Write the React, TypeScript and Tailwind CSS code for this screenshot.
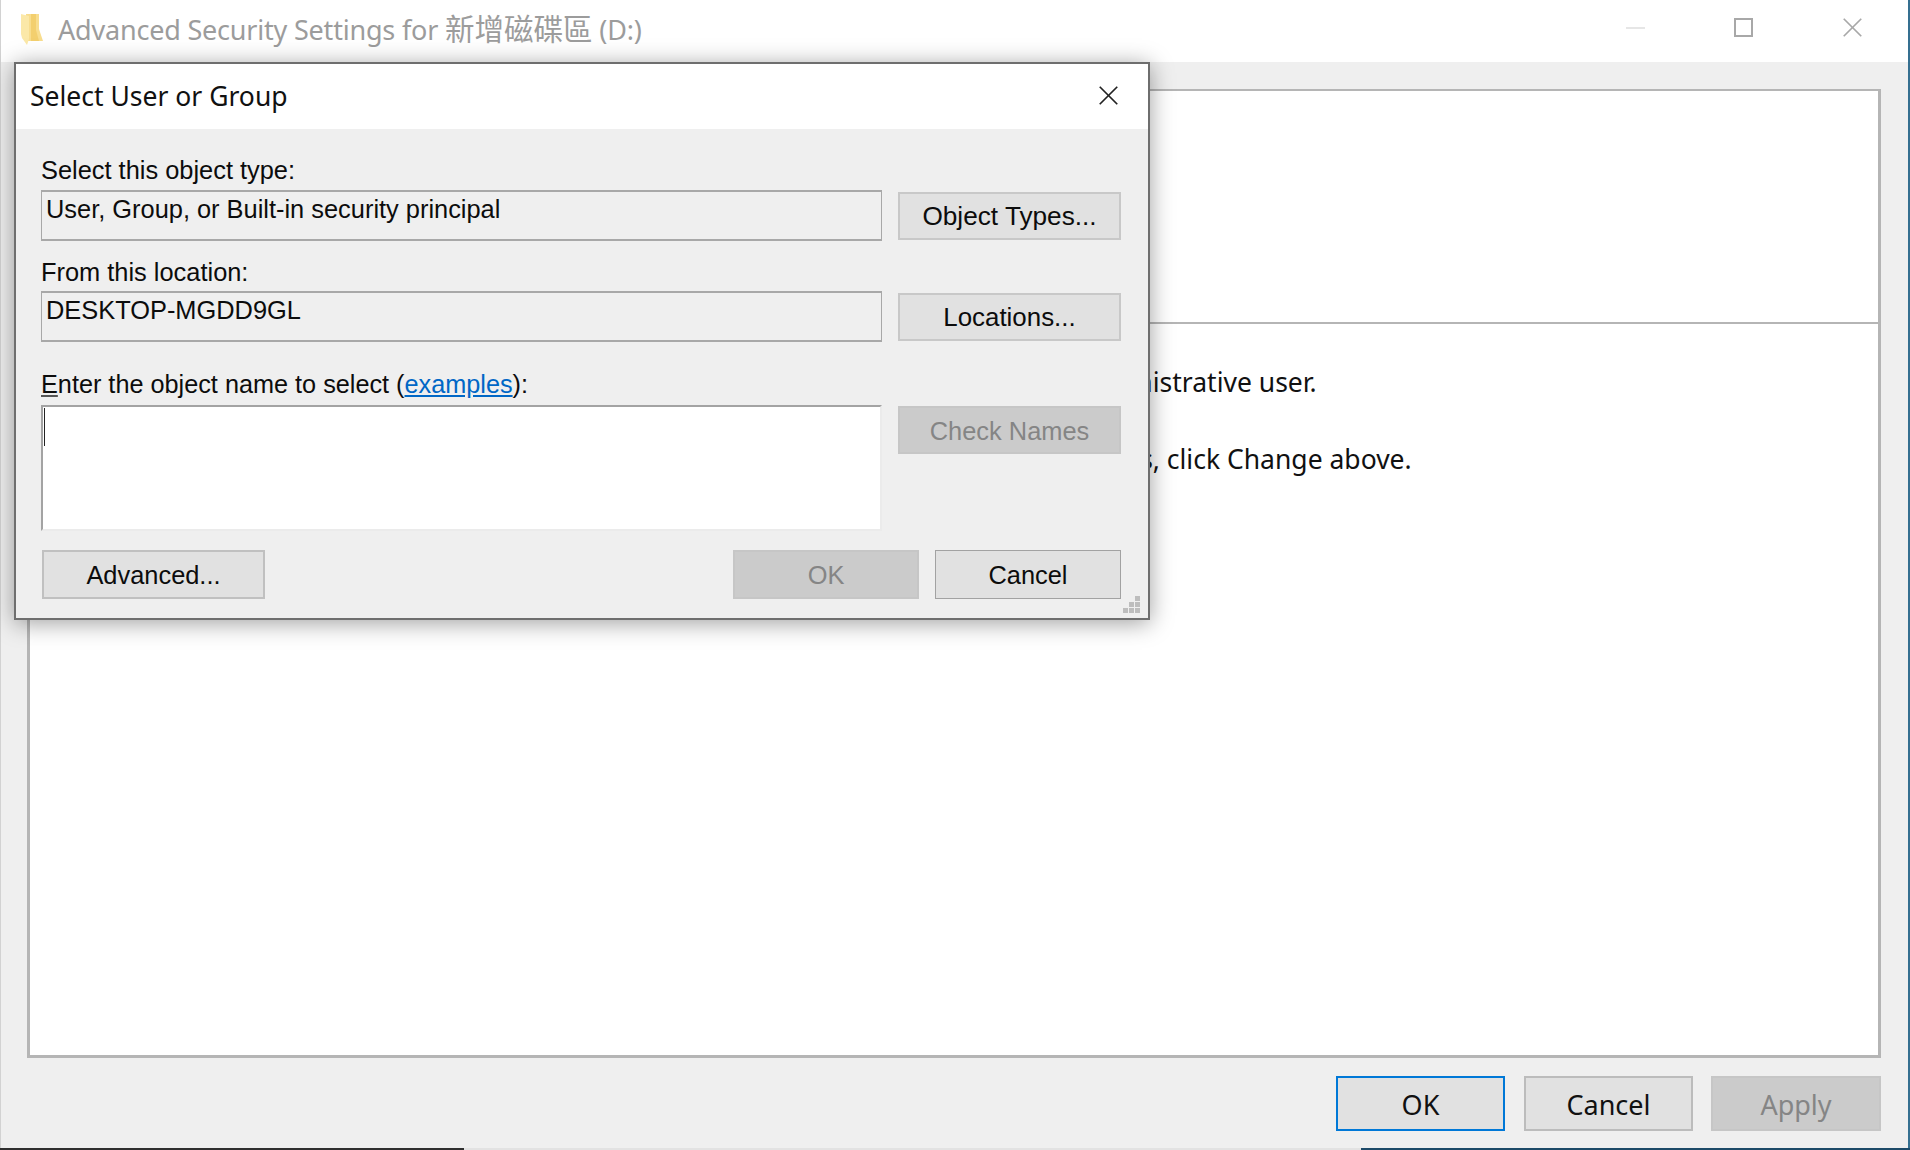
import React from "react";

const segoe = "font-['Noto_Sans','Noto_Sans_CJK_TC',sans-serif]";

function Folder() {
  return (
    <svg width="22" height="31" viewBox="0 0 22 31" className="shrink-0 mb-[4px]">
      <path d="M5 0H18V15L22 27H5Z" fill="#f8dd8e" />
      <path d="M10 0H15V16L18 27H10Z" fill="#f3cf6e" />
      <path d="M0 0L8 2V25L6 31L1 24L0 20Z" fill="#fbe8a8" />
    </svg>
  );
}

function Cross({ color, size, width }: { color: string; size: number; width: number }) {
  return (
    <svg width={size} height={size} viewBox="0 0 18 18" fill="none">
      <path d="M0.7 0.7L17.3 17.3M17.3 0.7L0.7 17.3" stroke={color} strokeWidth={width} />
    </svg>
  );
}

function Grip() {
  const cells = [
    [12, 0],
    [6, 6],
    [12, 6],
    [0, 12],
    [6, 12],
    [12, 12],
  ];
  return (
    <svg width="17" height="17" viewBox="0 0 17 17" className="absolute right-[8px] bottom-[5px]">
      {cells.map(([x, y]) => (
        <rect key={`${x}-${y}`} x={x} y={y} width="5" height="5" fill="#bdbdbd" />
      ))}
    </svg>
  );
}

function Dialog() {
  return (
    <div className="absolute left-[14px] top-[62px] w-[1136px] h-[558px] border-2 border-[#6e6e6e] bg-[#efefef] shadow-[0_3px_22px_rgba(0,0,0,0.38)] flex flex-col">
      <div className={`h-[65px] bg-white flex items-center justify-between pl-[14px] pr-[30px] shrink-0 ${segoe}`}>
        <span className="text-[26.5px] text-[#111] leading-none">Select User or Group</span>
        <div className="mb-[3px]">
          <Cross color="#222" size={19} width={1.6} />
        </div>
      </div>
      <div className="relative flex-1 flex flex-col pl-[25px] pr-[27px] pt-[27px] font-['Liberation_Sans',sans-serif] text-[#0c0c0c] text-[25.4px]">
        <div className="h-[28px] leading-[28px]">Select this object type:</div>
        <div className="mt-[6px] flex items-center gap-[16px]">
          <div className="w-[841px] h-[51px] border border-t-2 border-b-2 border-[#a8a8a8] pl-[4px] pt-[3px] leading-[28px]">
            User, Group, or Built-in security principal
          </div>
          <button className="w-[223px] h-[48px] pt-[2px] bg-[#e1e1e1] border-2 border-[#c8c8c8] text-[26.2px]">Object Types...</button>
        </div>
        <div className="mt-[17px] h-[28px] leading-[28px]">From this location:</div>
        <div className="mt-[5px] flex items-center gap-[16px]">
          <div className="w-[841px] h-[51px] border border-t-2 border-b-2 border-[#a8a8a8] pl-[4px] pt-[3px] leading-[28px]">
            DESKTOP-MGDD9GL
          </div>
          <button className="w-[223px] h-[48px] pt-[2px] bg-[#e1e1e1] border-2 border-[#c8c8c8] text-[25.9px]">Locations...</button>
        </div>
        <div className="mt-[28px] h-[28px] leading-[28px] text-[25.25px]">
          <span className="underline decoration-[#555]">E</span>nter the object name to select (
          <span className="text-[#0067c6] underline">examples</span>):
        </div>
        <div className="mt-[7px] flex items-start gap-[16px]">
          <div className="w-[841px] h-[126px] bg-white border-2 border-t-[#a3a3a3] border-l-[#a3a3a3] border-r-[#ebebeb] border-b-[#ebebeb] pl-[1px] pt-[1px]">
            <div className="w-px h-[38px] bg-[#222]" />
          </div>
          <button className="w-[223px] h-[48px] pt-[2px] mt-[1px] bg-[#cbcbcb] border-2 border-[#c6c6c6] text-[#858585]">Check Names</button>
        </div>
        <div className="mt-[19px] flex items-center">
          <button className="ml-[1px] w-[223px] h-[49px] pt-[2px] bg-[#e1e1e1] border-2 border-[#c0c0c0]">Advanced...</button>
          <button className="ml-[468px] w-[186px] h-[49px] pt-[2px] bg-[#cbcbcb] border-2 border-[#c6c6c6] text-[#858585]">OK</button>
          <button className="ml-[16px] w-[186px] h-[49px] pt-[2px] bg-[#e1e1e1] border border-[#a2a2a2]">Cancel</button>
        </div>
        <Grip />
      </div>
    </div>
  );
}

export default function App() {
  return (
    <div className="relative w-[1910px] h-[1150px] overflow-hidden bg-[#2f6a8c] flex flex-col">
      <div className="flex flex-1 min-h-0">
        <div className={`w-[1908px] bg-[#efefef] border-l border-[#d2d2d2] flex flex-col ${segoe}`}>
          <div className="h-[62px] bg-white shrink-0 flex items-center pl-[20px] pr-[46px] text-[27px]">
            <Folder />
            <span className="ml-[15px] text-[#9c9c9c] tracking-[-0.2px] leading-none mb-[5px]">
              Advanced Security Settings for <span className="text-[29.5px] tracking-normal">新增磁碟區</span> (D:)
            </span>
            <div className="ml-auto flex items-center gap-[88px] mb-[7px]">
              <div className="w-[19px] h-[2px] bg-[#e6e6e6]" />
              <div className="ml-[1px] w-[19px] h-[19px] border-2 border-[#a8a8a8]" />
              <div className="ml-[2px]">
                <Cross color="#a8a8a8" size={19} width={1.6} />
              </div>
            </div>
          </div>
          <div className="ml-[26px] mr-[27px] mt-[27px] h-[969px] shrink-0 border-[3px] border-t-2 border-[#b5b5b5] bg-white flex flex-col">
            <div className="h-[233px] shrink-0 border-b-2 border-[#b5b5b5]" />
            <div className="pt-[42px] text-[26.5px] text-[#111] whitespace-nowrap">
              <div className="h-[32px] leading-[32px] ml-[844px]">You must be an administrative user.</div>
              <div className="mt-[45px] h-[32px] leading-[32px] ml-[58px]">
                To try taking ownership of the object, which includes permission to view its properties, click Change above.
              </div>
            </div>
          </div>
          <div className="mt-[18px] pr-[27px] flex justify-end text-[27px]">
            <button className="w-[169px] h-[55px] pt-[3px] bg-[#e1e1e1] border-2 border-[#0078d7] text-[#111]">OK</button>
            <button className="ml-[19px] w-[169px] h-[55px] pt-[3px] bg-[#e1e1e1] border-2 border-[#bcbcbc] text-[#111]">Cancel</button>
            <button className="ml-[18px] w-[170px] h-[55px] pt-[3px] bg-[#cbcbcb] border-2 border-[#c6c6c6] text-[#858585]">Apply</button>
          </div>
        </div>
        <div className="w-[2px] bg-[#356f90]" />
      </div>
      <div className="h-[2px] flex shrink-0">
        <div className="w-[464px] bg-[#2f2f2f]" />
        <div className="w-[897px] bg-[#e2e2e2]" />
        <div className="flex-1 bg-[#1d4a68]" />
      </div>
      <Dialog />
    </div>
  );
}
